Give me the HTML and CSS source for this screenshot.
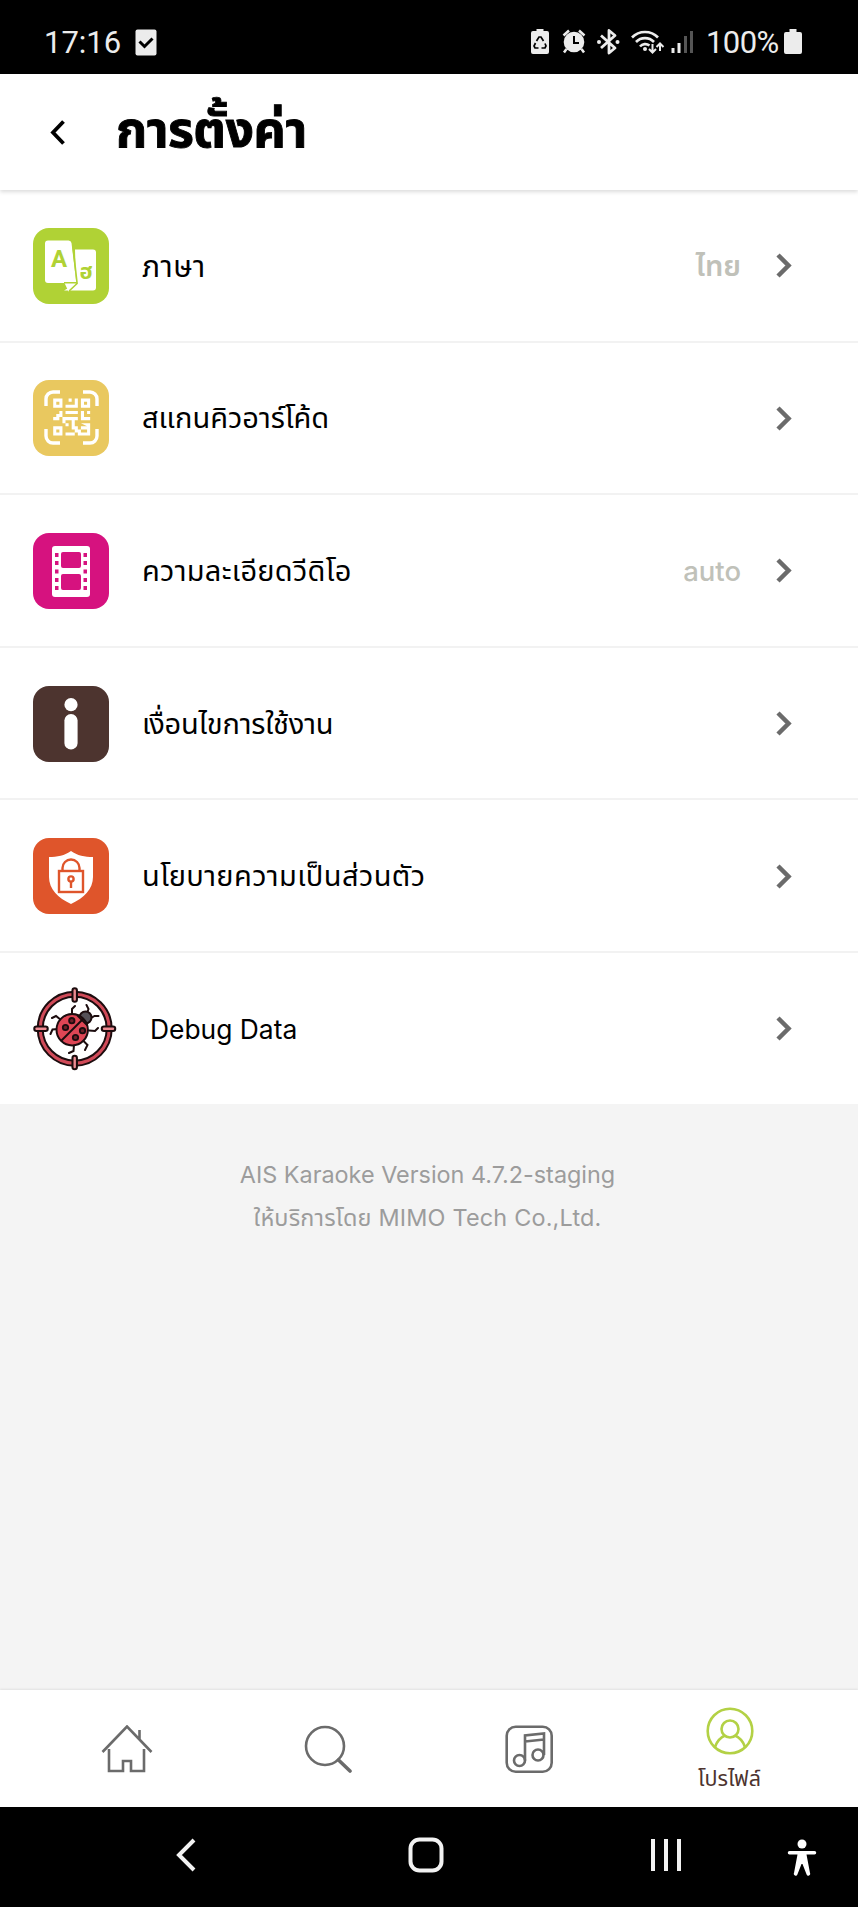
FILE: index.html
```html
<!DOCTYPE html>
<html lang="th">
<head>
<meta charset="utf-8">
<meta name="viewport" content="width=device-width">
<title>การตั้งค่า</title>
<link rel="stylesheet" href="styles.css">
</head>
<body>
<div class="phone">
  <div class="status">
    <span class="clock">17:16</span>
    <svg class="s-check" width="22" height="27" viewBox="0 0 22 27"><rect x=".5" y=".5" width="21" height="26" rx="2" fill="#ececec"/><path d="M4.500 12.500l5 5 8-8" fill="none" stroke="#000" stroke-width="3"/></svg>
    <svg class="s-eco" width="18" height="26" viewBox="0 0 18 26"><path d="M5.500 0h7v2H16a2 2 0 0 1 2 2v19a2 2 0 0 1-2 2H2a2 2 0 0 1-2-2V4a2 2 0 0 1 2-2h3.500z" fill="#ececec"/><path d="M5.500 12l2.500-4h2l2.500 4M14 14.500l1 2.500-1 2h-3.500M7.500 19H4l-1-2 1.500-3" fill="none" stroke="#000" stroke-width="1.700"/></svg>
    <svg class="s-alarm" width="24" height="25" viewBox="0 0 24 25"><circle cx="12" cy="13" r="10.300" fill="#ececec"/><path d="M12 7v7h5" fill="none" stroke="#000" stroke-width="2"/><path d="M1.500 6.500L7 1.500M22.500 6.500L17 1.500M4.500 20L2 23.500M19.500 20l2.500 3.500" stroke="#ececec" stroke-width="2.500"/></svg>
    <svg class="s-bt" width="24" height="26" viewBox="0 0 24 26"><path d="M4 6.500l14 12.500-6 5V1.500l6 5L4 19" fill="none" stroke="#ececec" stroke-width="2.800" stroke-linejoin="round"/><circle cx="2" cy="13" r="2" fill="#ececec"/><circle cx="20.500" cy="13" r="2" fill="#ececec"/></svg>
    <svg class="s-wifi" width="34" height="26" viewBox="0 0 34 26"><g fill="none" stroke="#ececec" stroke-width="2.600"><path d="M1 8.500a18 18 0 0 1 26 0M5 13a12.500 12.500 0 0 1 18 0M9 17.500a7 7 0 0 1 9.500-1"/><path d="M21.500 15v8M18 20l3.500 3.500 3.500-3.500M29 22v-7M25.500 18l3.500-3.500 3.500 3.500" stroke-width="2"/></g><circle cx="14" cy="20" r="2" fill="#ececec"/></svg>
    <svg class="s-signal" width="23" height="24" viewBox="0 0 23 24"><path d="M.5 18h3v5h-3zM6.500 13h3v10h-3z" fill="#ececec"/><path d="M13 6h3v17h-3zM19 1h3v22h-3z" fill="#555"/></svg>
    <span class="percent">100%</span>
    <svg class="s-batt" width="18" height="26" viewBox="0 0 18 26"><path d="M5.500 0h7v3H16a2 2 0 0 1 2 2v18a2 2 0 0 1-2 2H2a2 2 0 0 1-2-2V5a2 2 0 0 1 2-2h3.500z" fill="#ececec"/></svg>
  </div>

  <header class="header">
    <svg class="back" width="16" height="25" viewBox="0 0 16 25"><path d="M13.500 1.500l-10.500 11 10.500 11" fill="none" stroke="#000" stroke-width="3.800"/></svg>
    <h1 class="title">การตั้งค่า</h1>
  </header>

  <main class="list">
    <div class="row">
      <svg class="tile" viewBox="0 0 76 76"><rect width="76" height="76" rx="16" fill="#b0d235"/><path d="M42 21.500h18a3 3 0 0 1 3 3v35a3 3 0 0 1-3 3H31l12-7z" fill="#fff"/><path d="M15 12.500h20.500a3 3 0 0 1 3 2.500l5 41-8 7.500-4-8.500H15a3 3 0 0 1-3-3V15.500a3 3 0 0 1 3-3z" fill="#fff"/><path d="M39.800 17l4.300 38.500-8 7.500M31 54.800h13" fill="none" stroke="#b0d235" stroke-width="1.600"/><text class="tile-a" x="26" y="39">A</text><text class="tile-th" x="53" y="51">ฮ</text></svg>
      <span class="label l1">ภาษา</span><span class="value v1">ไทย</span>
      <svg class="chev" viewBox="0 0 16 25"><path d="M2 2l10.500 10.500L2 23"/></svg>
    </div>
    <div class="row">
      <svg class="tile" viewBox="0 0 76 76"><rect width="76" height="76" rx="16" fill="#e9c85f"/><path d="M13 26v-7a7 7 0 0 1 7-7h7M50 12h7a7 7 0 0 1 7 7v7M64 49v7a7 7 0 0 1-7 7h-7M27 63h-7a7 7 0 0 1-7-7v-7" fill="none" stroke="#fff" stroke-width="3.400"/><path transform="translate(20.200 18.600) scale(3.080)" fill="#fff" fill-rule="evenodd" d="M0 0h3v3h-3zM1 1v1h1v-1zM9 0h3v3h-3zM10 1v1h1v-1zM0 9h3v3h-3zM1 10v1h1v-1zM7 0h1v3h-4v-1h3zM5 0h1v1h-1zM2 4h1v2h-1v1h-2v-1h1v-1h1zM4 4h4v1h-4zM9 4h1v2h2v1h-3zM11 4h1v1h-1zM3 6h5v1h-1v2h-1v-2h-2v1h-1zM4 8h1v1h-1zM6 9h2v2h-1v-1h-1zM4 11h3v1h-3zM9 8h3v4h-3v-1h2v-1h-2v-1h2zM8 10h1v2h-1z"/></svg>
      <span class="label l2">สแกนคิวอาร์โค้ด</span>
      <svg class="chev" viewBox="0 0 16 25"><path d="M2 2l10.500 10.500L2 23"/></svg>
    </div>
    <div class="row">
      <svg class="tile" viewBox="0 0 76 76"><rect width="76" height="76" rx="16" fill="#d6127f"/><rect x="19" y="13" width="38" height="51" rx="3" fill="#fff"/><g fill="#d6127f"><rect x="28" y="19" width="20" height="16" rx="2"/><rect x="28" y="41" width="20" height="16" rx="2"/><path d="M22 20h3.500v4H22zm0 8h3.500v4H22zm0 8.500h3.500v4H22zm0 8.500h3.500v4H22zm0 8h3.500v4H22zM50.500 20H54v4h-3.500zm0 8H54v4h-3.500zm0 8.500H54v4h-3.500zm0 8.500H54v4h-3.500zm0 8H54v4h-3.500z"/></g></svg>
      <span class="label l3">ความละเอียดวีดิโอ</span><span class="value v2">auto</span>
      <svg class="chev" viewBox="0 0 16 25"><path d="M2 2l10.500 10.500L2 23"/></svg>
    </div>
    <div class="row">
      <svg class="tile" viewBox="0 0 76 76"><rect width="76" height="76" rx="16" fill="#4d342f"/><circle cx="38" cy="18.700" r="6.600" fill="#fff"/><rect x="31.400" y="28" width="13.200" height="35.500" rx="6.600" fill="#fff"/></svg>
      <span class="label l4">เงื่อนไขการใช้งาน</span>
      <svg class="chev" viewBox="0 0 16 25"><path d="M2 2l10.500 10.500L2 23"/></svg>
    </div>
    <div class="row">
      <svg class="tile" viewBox="0 0 76 76"><rect width="76" height="76" rx="16" fill="#df552b"/><path d="M38 13c6 4.500 14 6 22 6v20c0 12-9 21-22 27-13-6-22-15-22-27V19c8 0 16-1.500 22-6z" fill="#fff"/><g fill="none" stroke="#df552b" stroke-width="2.400"><rect x="26" y="33" width="24" height="21"/><path d="M29.500 33v-3a8.500 8.500 0 0 1 17 0v3"/><circle cx="38" cy="41" r="2.600"/><path d="M38 44v6"/></g></svg>
      <span class="label l5">นโยบายความเป็นส่วนตัว</span>
      <svg class="chev" viewBox="0 0 16 25"><path d="M2 2l10.500 10.500L2 23"/></svg>
    </div>
    <div class="row">
      <svg class="bug" viewBox="0 0 84 84"><circle cx="41.700" cy="41.700" r="34.500" fill="none" stroke="#1c0c0e" stroke-width="7"/><circle cx="41.700" cy="41.700" r="34.500" fill="none" stroke="#d04a58" stroke-width="3"/><g stroke="#1c0c0e" stroke-width="6.500" stroke-linecap="round"><path d="M41.700 3.500v9M41.700 71v9M3.500 41.700h9M71 41.700h9"/></g><g stroke="#ee8b92" stroke-width="2.400" stroke-linecap="round"><path d="M41.700 3.500v9M41.700 71v9M3.500 41.700h9M71 41.700h9"/></g><g fill="none" stroke="#1c0c0e" stroke-width="2" stroke-linecap="round"><path d="M19 31l4-2 5 4M17.500 47l2-4.500 6-.5M42 19l-3 3v5M53.500 18l2 4-2 5M65.500 29h-4l-5 3M65 41l-3 3-6-.5M36 66l4.500-2 .5-6M52 63l2.500-5-4-4"/></g><circle cx="52.500" cy="30.500" r="6" fill="#555158" stroke="#1c0c0e" stroke-width="2"/><circle cx="39.200" cy="42.700" r="15.700" fill="#df4655" stroke="#1c0c0e" stroke-width="2"/><path d="M28.500 53.500L50 32" stroke="#1c0c0e" stroke-width="2"/><path d="M44 28l10.500 10.500" stroke="#1c0c0e" stroke-width="2"/><g fill="#6e2027" stroke="#1c0c0e" stroke-width="1.800"><circle cx="38.800" cy="33.700" r="2.700"/><circle cx="32.500" cy="40.500" r="2.700"/><circle cx="49.500" cy="43.700" r="2.700"/><circle cx="42.500" cy="50.500" r="2.700"/></g></svg>
      <span class="label l6">Debug Data</span>
      <svg class="chev" viewBox="0 0 16 25"><path d="M2 2l10.500 10.500L2 23"/></svg>
    </div>
  </main>

  <section class="about">
    <p class="about-line a1">AIS Karaoke Version 4.7.2-staging</p>
    <p class="about-line a2">ให้บริการโดย MIMO Tech Co.,Ltd.</p>
  </section>

  <nav class="tabs">
    <div class="tab"><svg width="52" height="48" viewBox="0 0 52 48"><path d="M1.500 27L26 1.500 50.500 27M8 24v22h14V36h8v10h13V24M38.500 5v9" fill="none" stroke="#6b6b6b" stroke-width="2.600"/></svg></div>
    <div class="tab"><svg width="48" height="48" viewBox="0 0 48 48"><circle cx="21" cy="21" r="19" fill="none" stroke="#6b6b6b" stroke-width="2.600"/><path d="M34.500 35L46 46" stroke="#6b6b6b" stroke-width="3.600" stroke-linecap="round"/></svg></div>
    <div class="tab"><svg width="48" height="48" viewBox="0 0 48 48"><g fill="none" stroke="#6b6b6b" stroke-width="2.600"><rect x="1.700" y="1.700" width="45" height="45" rx="9"/><circle cx="14.500" cy="35.500" r="5.500"/><circle cx="33" cy="30" r="5.500"/><path d="M20 35.500v-25L39 8.500V30M20 16.500l19-2"/></g></svg></div>
    <div class="tab active"><svg width="48" height="48" viewBox="0 0 48 48"><g fill="none" stroke="#b3d145" stroke-width="2.600"><circle cx="24" cy="24" r="22.300"/><circle cx="24" cy="22" r="8.500"/><path d="M9 40c2-6 5.500-9.500 10-11.500M39 40c-2-6-5.500-9.500-10-11.500"/></g></svg><span class="tab-label">โปรไฟล์</span></div>
  </nav>

  <div class="system">
    <div class="key"><svg width="20" height="34" viewBox="0 0 20 34"><path d="M18 2L3 17l15 15" fill="none" stroke="#f2f2f2" stroke-width="4"/></svg></div>
    <div class="key"><svg width="36" height="36" viewBox="0 0 36 36"><rect x="2.500" y="2.500" width="31" height="31" rx="9" fill="none" stroke="#f2f2f2" stroke-width="4"/></svg></div>
    <div class="key"><svg width="32" height="34" viewBox="0 0 32 34"><path d="M3 1v32M16 1v32M29 1v32" stroke="#f2f2f2" stroke-width="4"/></svg></div>
    <div class="key-access"><svg width="30" height="37" viewBox="0 0 30 37"><circle cx="15" cy="5" r="4.500" fill="#fff"/><path d="M2.500 12h25a1.500 1.500 0 0 1 0 3.500H19.500l3.500 18.500a1.700 1.700 0 0 1-3.400 1.500L15.500 25h-1l-4.100 10.500a1.700 1.700 0 0 1-3.400-1.500L10.500 15.500h-8a1.500 1.500 0 0 1 0-3.500z" fill="#fff"/></svg></div>
  </div>
</div>
</body>
</html>
```
FILE: styles.css
```css
* { box-sizing: border-box; }
body { margin: 0; background: #f4f4f4; font-family: Inter, "Noto Sans Thai", "Noto Sans", sans-serif; }
svg { display: block; flex: none; }
.phone { width: 858px; height: 1907px; display: flex; flex-direction: column; }

.status { height: 74px; background: #000; color: #ececec; display: flex; align-items: flex-start; padding: 29px 0 0 44px; font: 31px/27px Roboto, sans-serif; }
.clock { width: 91px; }
.s-eco { margin-left: 374px; }
.s-alarm { margin-left: 13px; }
.s-bt { margin-left: 11px; }
.s-wifi { margin-left: 10px; }
.s-signal { margin: 1px 12px 0 6px; }
.percent { width: 78px; letter-spacing: -.6px; }

.header { height: 116px; flex: none; background: #fff; display: flex; align-items: center; padding: 0 0 0 50px; box-shadow: 0 2px 4px rgba(0, 0, 0, .14); z-index: 1; }
.title { margin: -6px 0 0 50px; font-size: 50px; line-height: 70px; font-weight: 700; letter-spacing: -.5px; color: #000; -webkit-text-stroke: .9px #000; white-space: nowrap; }

.list { flex: none; height: 914px; background: #fff; display: grid; grid-template-rows: repeat(5, 152.6px) 1fr; }
.row { display: flex; align-items: center; padding: 1px 66px 0 33px; border-bottom: 2px solid #f2f2f2; }
.row:last-child { border-bottom: 0; }
.tile { width: 76px; height: 76px; margin-right: 33px; }
.bug { width: 84px; height: 84px; margin-right: 33px; }
.tile-a { font: 700 24px Roboto, sans-serif; fill: #b0d235; text-anchor: middle; }
.tile-th { font: 700 22px "Noto Sans Thai", sans-serif; fill: #b0d235; text-anchor: middle; }
.label { flex: 1; font-size: 29px; line-height: 40px; color: #000; white-space: nowrap; }
.l1 { font-size: 30px; letter-spacing: .5px; }
.l3 { letter-spacing: .3px; }
.l4 { letter-spacing: -.2px; }
.l5 { letter-spacing: .4px; }
.l6 { font-size: 26.4px; }
.value { font-size: 27.500px; line-height: 40px; font-weight: 500; color: #c0c1b9; margin-right: 35px; }
.v1 { font-size: 29px; font-weight: 600; }
.chev { width: 16px; height: 25px; fill: none; stroke: #6b6b6b; stroke-width: 4.500px; }

.about { flex: 1; padding: 49px 3px 0 0; text-align: center; color: #9c9c9c; }
.about-line { margin: 0; font-size: 23.400px; line-height: 43px; white-space: nowrap; }
.a2 { letter-spacing: .2px; }

.tabs { height: 117px; flex: none; background: #fff; display: grid; grid-template-columns: repeat(4, 201px); padding: 0 26px; box-shadow: 0 -1px 2px rgba(0, 0, 0, .08); }
.tab { display: flex; flex-direction: column; align-items: center; justify-content: center; }
.active { justify-content: flex-start; padding-top: 17px; }
.tab-label { font-size: 21.500px; line-height: 30px; margin-top: 8px; color: #4d342f; white-space: nowrap; }

.system { height: 100px; flex: none; background: #000; display: grid; grid-template-columns: 240px 240px 240px 32px; align-items: center; justify-items: center; padding: 0 0 4px 66px; }
.key-access { padding-top: 4px; }
```
